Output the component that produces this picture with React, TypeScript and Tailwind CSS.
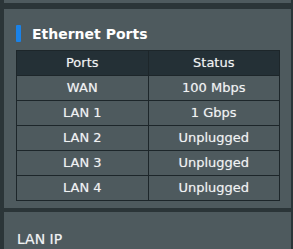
const rows = [
  { port: 'WAN', status: '100 Mbps' },
  { port: 'LAN 1', status: '1 Gbps' },
  { port: 'LAN 2', status: 'Unplugged' },
  { port: 'LAN 3', status: 'Unplugged' },
  { port: 'LAN 4', status: 'Unplugged' },
];

export default function App() {
  return (
    <div
      className="w-[293px] h-[249px] overflow-hidden bg-[#2b3538] pl-[4px] pr-[2px] flex flex-col text-[#f0f2f3]"
      style={{ fontFamily: '"DejaVu Sans", Verdana, sans-serif' }}
    >
      {/* previous panel edge */}
      <div className="h-[3px] shrink-0 bg-[#4e5a5e]" />

      {/* Ethernet ports panel */}
      <div className="mt-[6px] shrink-0 bg-[#4e5a5e] pt-[16px] px-[12px] h-[199px]">
        <div className="flex items-center gap-[11px] h-[17px]">
          <span className="w-[5px] h-[17px] bg-[#1a82e8] rounded-[1px]" />
          <h2 className="text-[14px] font-bold text-white leading-none">Ethernet Ports</h2>
        </div>
        <table className="mt-[8px] w-[264px] border-collapse border border-[#1d262a] text-[13px] text-center [text-shadow:0_0_1px_rgba(255,255,255,0.45)]">
          <thead>
            <tr className="bg-[#243036] h-[25px]">
              <th className="border border-[#1d262a] font-normal w-1/2 p-0">Ports</th>
              <th className="border border-[#1d262a] font-normal p-0">Status</th>
            </tr>
          </thead>
          <tbody>
            {rows.map((r) => (
              <tr key={r.port} className="h-[25px]">
                <td className="border border-[#1d262a] p-0">{r.port}</td>
                <td className="border border-[#1d262a] p-0">{r.status}</td>
              </tr>
            ))}
          </tbody>
        </table>
      </div>

      {/* LAN IP panel */}
      <div className="mt-[4px] flex-1 bg-[#4e5a5e] px-[13px] pt-[20px]">
        <div className="text-[14px] leading-none [text-shadow:0_0_1px_rgba(255,255,255,0.45)]">LAN IP</div>
      </div>
    </div>
  );
}
